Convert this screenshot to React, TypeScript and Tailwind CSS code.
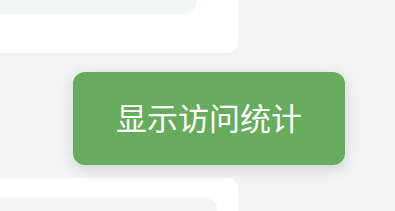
export default function App() {
  return (
    <div className="w-[395px] h-[211px] overflow-hidden bg-[#f2f3f5] flex flex-col" style={{ fontFamily: '"Noto Sans CJK SC", "Noto Sans", sans-serif' }}>
      <div className="w-[238px] h-[53px] shrink-0 bg-white rounded-br-[10px] flex flex-col">
        <div className="w-[197px] h-[14px] bg-[#f1f7f5] rounded-br-[16px]" />
      </div>
      <div className="flex justify-end pr-[50px] mt-[19px] shrink-0">
        <button className="w-[272px] h-[93px] pb-[4px] rounded-[12px] bg-[#67ab5d] text-white text-[31px] leading-none shadow-[0_4px_14px_rgba(0,0,0,0.14)] flex items-center justify-center">
          显示访问统计
        </button>
      </div>
      <div className="w-[238px] mt-[13px] shrink-0 h-[60px] bg-white rounded-tr-[10px] pt-[20px] pr-[21px]">
        <div className="h-[40px] bg-[#f3f4f6] rounded-tr-[10px]" />
      </div>
    </div>
  );
}
